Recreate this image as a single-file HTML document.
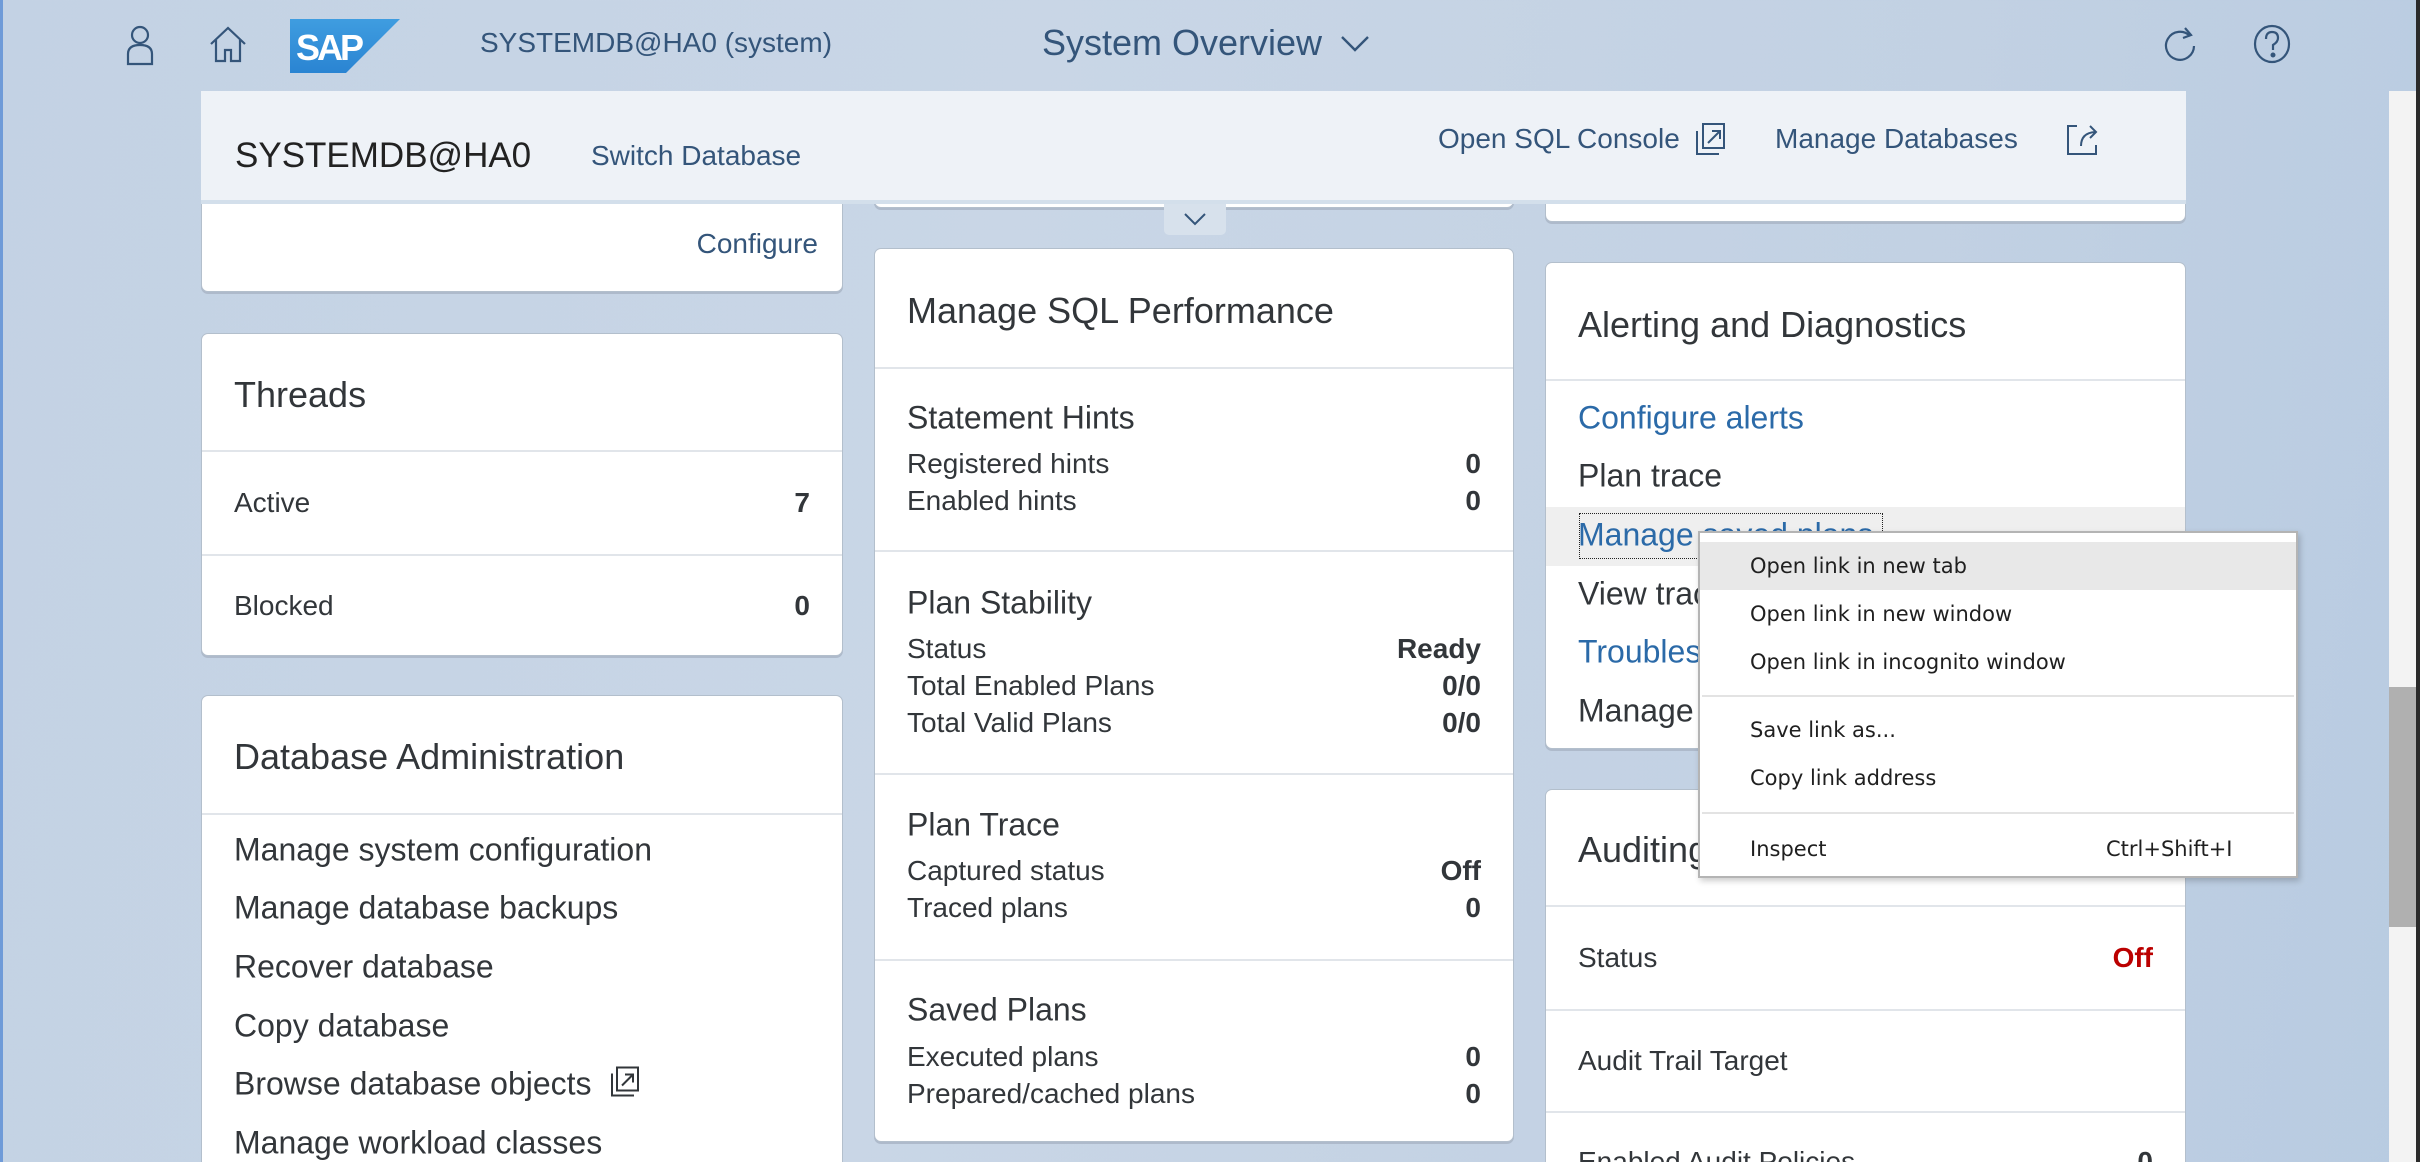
<!DOCTYPE html>
<html style="width:2420px;height:1162px;overflow:hidden"><head><meta charset="utf-8"><style>
*{margin:0;padding:0;box-sizing:border-box}
body{width:2420px;height:1162px;overflow:hidden;position:relative;font-family:"Liberation Sans",Arial,sans-serif;background:linear-gradient(100deg,#c3d2e4 0%,#c9d6e6 40%,#c2d1e3 75%,#b8cbe1 100%);color:#32363a}
.a{position:absolute}
.card{position:absolute;background:#fff;border:1.5px solid #b3bfcc;border-radius:7px;box-shadow:0 2px 0 #aebacb;overflow:hidden}
.t{position:absolute;left:32px;font-size:36px;color:#32363a;white-space:nowrap;transform:translateY(-50%)}
.row{position:absolute;left:32px;right:32px;font-size:28px;transform:translateY(-50%);display:flex;justify-content:space-between;white-space:nowrap}
.row b{font-weight:bold;color:#32363a}
.sm{font-size:28px}
.hd{font-size:32px}
.div{position:absolute;left:0;right:0;height:1.5px;background:#e1e5ea}
.lnk{color:#2b6aa8}
.hdr{font-size:28px;color:#34557a;white-space:nowrap;transform:translateY(-50%)}
.mi{position:absolute;left:50px;font-family:"DejaVu Sans","Liberation Sans",sans-serif;font-size:21px;color:#202020;transform:translateY(-50%);white-space:nowrap}
</style></head><body>
<div class="a" style="left:0;top:0;width:3px;height:1162px;background:#6f9bd8"></div>
<svg class="a" style="left:124px;top:24px" width="32" height="42" viewBox="0 0 32 42" fill="none" stroke="#34557a" stroke-width="2.2"><circle cx="16" cy="11" r="8"/><path d="M4 40V30q0-9 12-9t12 9v10z"/></svg>
<svg class="a" style="left:208px;top:24px" width="40" height="40" viewBox="0 0 40 40" fill="none" stroke="#34557a" stroke-width="2.2"><path d="M3 20L20 4l17 16M8 16v21h9v-11h6v11h9V16"/></svg>
<svg class="a" style="left:290px;top:19px" width="110" height="54" viewBox="0 0 110 54"><defs><linearGradient id="g" x1="0" y1="0" x2="0" y2="1"><stop offset="0" stop-color="#3f9de0"/><stop offset="1" stop-color="#2a84d2"/></linearGradient></defs><path d="M0 0h110L56 54H0z" fill="url(#g)"/><text x="6" y="41" font-family="Liberation Sans" font-weight="bold" font-size="36" fill="#fff" letter-spacing="-3">SAP</text></svg>
<div class="a hdr" style="left:480px;top:43px">SYSTEMDB@HA0 (system)</div>
<div class="a hdr" style="left:1042px;top:43px;font-size:36px">System Overview</div>
<svg class="a" style="left:1340px;top:34px" width="30" height="20" viewBox="0 0 30 20" fill="none" stroke="#34557a" stroke-width="2.4"><path d="M2 3l13 13 13-13"/></svg>
<svg class="a" style="left:2164px;top:24px" width="36" height="42" viewBox="0 0 36 42" fill="none" stroke="#34557a" stroke-width="2.2"><path d="M26 12a14 14 0 1 0 4 10"/><path d="M21 4l6 7-8 3"/></svg>
<svg class="a" style="left:2252px;top:24px" width="40" height="40" viewBox="0 0 40 40" fill="none" stroke="#34557a" stroke-width="2.2"><ellipse cx="20" cy="20" rx="17" ry="18"/><path d="M14 15q0-7 6-7t6 6q0 4-5 7v5"/><circle cx="21" cy="31" r="1.4" fill="#34557a"/></svg>
<div class="a" style="left:2389px;top:91px;width:28px;height:1071px;background:#f3f3f3"></div>
<div class="a" style="left:2389px;top:687px;width:28px;height:240px;background:#b0b0b0"></div>
<div class="a" style="left:2416px;top:0;width:4px;height:1162px;background:#2a2a2a"></div>

<div class="card" style="left:201px;top:160px;width:642px;height:132px;border-top:none;border-radius:0 0 7px 7px">
<div class="a" style="right:24px;top:84px;font-size:28px;color:#34557a;transform:translateY(-50%)">Configure</div></div>
<div class="card" style="left:201px;top:333px;width:642px;height:323px">
<div class="t" style="top:61px">Threads</div><div class="div" style="top:116px"></div>
<div class="row" style="top:169px"><span>Active</span><b>7</b></div><div class="div" style="top:220px"></div>
<div class="row" style="top:272px"><span>Blocked</span><b>0</b></div></div>
<div class="card" style="left:201px;top:695px;width:642px;height:480px">
<div class="t" style="top:61px">Database Administration</div><div class="div" style="top:117px"></div>
<div class="row hd" style="top:154px"><span>Manage system configuration</span></div>
<div class="row hd" style="top:212px"><span>Manage database backups</span></div>
<div class="row hd" style="top:271px"><span>Recover database</span></div>
<div class="row hd" style="top:330px"><span>Copy database</span></div>
<div class="row hd" style="top:388px;justify-content:flex-start"><span>Browse database objects</span><svg style="margin-left:16px" width="32" height="32" viewBox="0 0 32 32" fill="none" stroke="#32363a" stroke-width="2"><path d="M4 8v22h22"/><rect x="9" y="2" width="21" height="23"/><path d="M14 20l11-11M17 9h8v8"/></svg></div>
<div class="row hd" style="top:447px"><span>Manage workload classes</span></div></div>

<div class="card" style="left:874px;top:150px;width:640px;height:58px;border-top:none;border-radius:0 0 7px 7px"></div>
<div class="a" style="left:1164px;top:201px;width:62px;height:34px;background:#d7e1ec;border-radius:0 0 5px 5px"></div>
<svg class="a" style="left:1183px;top:212px" width="24" height="14" viewBox="0 0 24 14" fill="none" stroke="#34557a" stroke-width="2"><path d="M2 2l10 10 10-10"/></svg>
<div class="card" style="left:874px;top:248px;width:640px;height:894px">
<div class="t" style="top:62px">Manage SQL Performance</div><div class="div" style="top:118px"></div>
<div class="row hd" style="top:169px"><span>Statement Hints</span></div>
<div class="row sm" style="top:215px"><span>Registered hints</span><b>0</b></div>
<div class="row sm" style="top:252px"><span>Enabled hints</span><b>0</b></div><div class="div" style="top:301px"></div>
<div class="row hd" style="top:354px"><span>Plan Stability</span></div>
<div class="row sm" style="top:400px"><span>Status</span><b>Ready</b></div>
<div class="row sm" style="top:437px"><span>Total Enabled Plans</span><b>0/0</b></div>
<div class="row sm" style="top:474px"><span>Total Valid Plans</span><b>0/0</b></div><div class="div" style="top:524px"></div>
<div class="row hd" style="top:576px"><span>Plan Trace</span></div>
<div class="row sm" style="top:622px"><span>Captured status</span><b>Off</b></div>
<div class="row sm" style="top:659px"><span>Traced plans</span><b>0</b></div><div class="div" style="top:710px"></div>
<div class="row hd" style="top:761px"><span>Saved Plans</span></div>
<div class="row sm" style="top:808px"><span>Executed plans</span><b>0</b></div>
<div class="row sm" style="top:845px"><span>Prepared/cached plans</span><b>0</b></div></div>

<div class="card" style="left:1545px;top:160px;width:641px;height:62px;border-top:none;border-radius:0 0 7px 7px"></div>
<div class="card" style="left:1545px;top:262px;width:641px;height:487px">
<div class="t" style="top:62px">Alerting and Diagnostics</div><div class="div" style="top:116px"></div>
<div class="row hd lnk" style="top:155px"><span>Configure alerts</span></div>
<div class="row hd" style="top:213px"><span>Plan trace</span></div>
<div class="a" style="left:0;right:0;top:244px;height:59px;background:#efefef"></div>
<div class="a" style="left:33px;top:250px;width:304px;height:46px;border:1.5px dotted #222"></div>
<div class="row hd lnk" style="top:272px"><span>Manage saved plans</span></div>
<div class="row hd" style="top:331px"><span>View trace</span></div>
<div class="row hd lnk" style="top:389px"><span>Troubleshoot</span></div>
<div class="row hd" style="top:448px"><span>Manage</span></div></div>
<div class="card" style="left:1545px;top:789px;width:641px;height:420px">
<div class="t" style="top:60px">Auditing</div><div class="div" style="top:115px"></div>
<div class="row" style="top:168px"><span>Status</span><b style="color:#bb0000">Off</b></div><div class="div" style="top:219px"></div>
<div class="row" style="top:271px"><span>Audit Trail Target</span></div><div class="div" style="top:321px"></div>
<div class="row" style="top:372px"><span>Enabled Audit Policies</span><b>0</b></div></div>

<div class="a" style="left:201px;top:91px;width:1985px;height:113px;background:#eef2f7;border-bottom:4px solid #d3dfeb"></div>
<div class="a" style="left:235px;top:156px;font-size:35px;color:#222;transform:translateY(-50%)">SYSTEMDB@HA0</div>
<div class="a hdr" style="left:591px;top:156px">Switch Database</div>
<div class="a hdr" style="left:1438px;top:139px">Open SQL Console</div>
<svg class="a" style="left:1694px;top:122px" width="34" height="34" viewBox="0 0 34 34" fill="none" stroke="#34557a" stroke-width="2"><path d="M3 9v23h22"/><rect x="9" y="2" width="21" height="24"/><path d="M14 21l12-12M18 9h8v8"/></svg>
<div class="a hdr" style="left:1775px;top:139px">Manage Databases</div>
<svg class="a" style="left:2065px;top:122px" width="36" height="34" viewBox="0 0 36 34" fill="none" stroke="#34557a" stroke-width="2"><path d="M12 4H3v28h28v-9"/><path d="M16 24q0-13 14-14M25 4l6 6-6 6"/></svg>

<div class="a" style="left:1698px;top:531px;width:600px;height:347px;background:#fff;border:2px solid #b4b4b4;box-shadow:2px 3px 6px rgba(0,0,0,.2)">
<div class="a" style="left:0;right:0;top:9px;height:48px;background:#e8e8e8"></div>
<div class="mi" style="top:33px">Open link in new tab</div>
<div class="mi" style="top:81px">Open link in new window</div>
<div class="mi" style="top:129px">Open link in incognito window</div>
<div class="a" style="left:2px;right:2px;top:162px;height:1.5px;background:#e3e3e3"></div>
<div class="mi" style="top:197px">Save link as...</div>
<div class="mi" style="top:245px">Copy link address</div>
<div class="a" style="left:2px;right:2px;top:279px;height:1.5px;background:#e3e3e3"></div>
<div class="mi" style="top:316px">Inspect</div>
<div class="mi" style="top:316px;left:406px">Ctrl+Shift+I</div>
</div>
</body></html>
